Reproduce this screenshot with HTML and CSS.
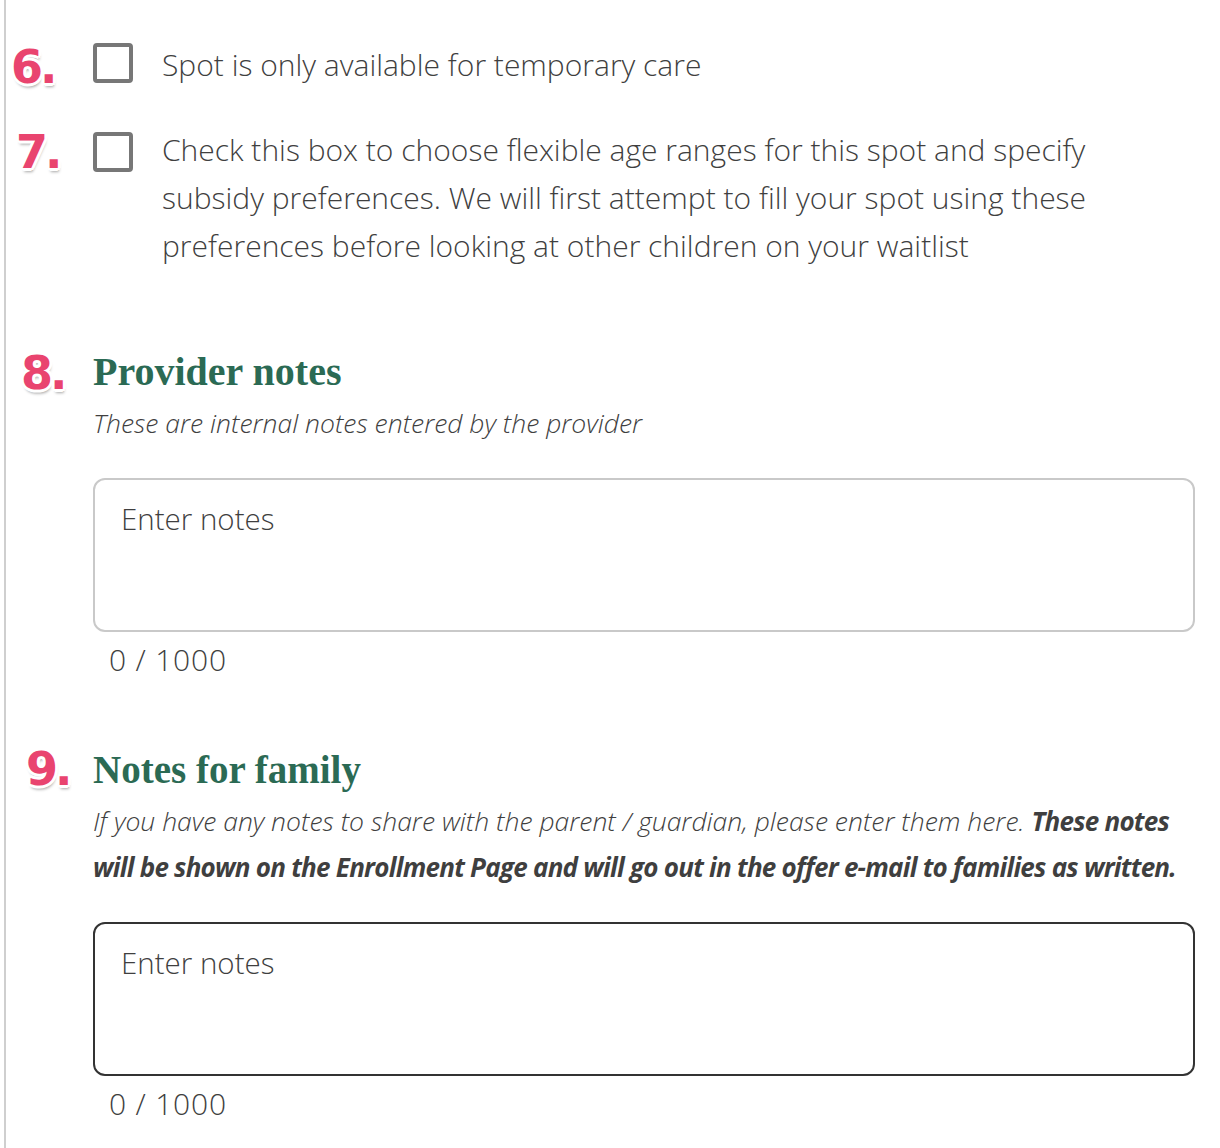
FILE: index.html
```html
<!DOCTYPE html>
<html lang="en">
<head>
<meta charset="utf-8">
<title>Spot settings</title>
<link rel="stylesheet" href="styles.css">
</head>
<body>
<div class="page">
  <div class="check-row row-6">
    <span class="badge badge-6">6.</span>
    <span class="box"></span>
    <p class="check-label">Spot is only available for temporary care</p>
  </div>
  <div class="check-row row-7">
    <span class="badge badge-7">7.</span>
    <span class="box"></span>
    <p class="check-label">Check this box to choose flexible age ranges for this spot and specify subsidy preferences. We will first attempt to fill your spot using these preferences before looking at other children on your waitlist</p>
  </div>

  <section class="notes notes-provider">
    <span class="badge badge-8">8.</span>
    <h2 class="notes-title">Provider notes</h2>
    <p class="notes-desc">These are internal notes entered by the provider</p>
    <div class="field field-light"><span class="placeholder">Enter notes</span></div>
    <div class="counter">0 / 1000</div>
  </section>

  <section class="notes notes-family">
    <span class="badge badge-9">9.</span>
    <h2 class="notes-title">Notes for family</h2>
    <p class="notes-desc">If you have any notes to share with the parent / guardian, please enter them here. <strong>These notes<br>will be shown on the Enrollment Page and will go out in the offer e-mail to families as written.</strong></p>
    <div class="field field-dark"><span class="placeholder">Enter notes</span></div>
    <div class="counter">0 / 1000</div>
  </section>
</div>
</body>
</html>
```

FILE: styles.css
```css
html, body {
  margin: 0;
  padding: 0;
  background: #ffffff;
}

body {
  font-family: "Open Sans", "Liberation Sans", sans-serif;
  color: #404040;
}

.page {
  position: relative;
  margin-left: 4px;
  border-left: 2px solid #cfcfcf;
  min-height: 1148px;
  box-sizing: border-box;
  padding: 41px 0 0 87px;
}

.check-row {
  position: relative;
  display: flex;
  align-items: flex-start;
  gap: 29px;
}

.row-7 {
  margin-top: 37px;
}

.box {
  flex: none;
  width: 40px;
  height: 40px;
  box-sizing: border-box;
  border: 4px solid #777777;
  border-radius: 4px;
  margin-top: 2px;
}

.row-7 .box {
  margin-top: 6px;
}

.check-label {
  margin: 0;
  font-size: 30px;
  font-weight: 300;
  line-height: 48px;
  color: #3f3f3f;
  max-width: 945px;
}

.notes {
  position: relative;
}

.notes-provider {
  margin-top: 78px;
}

.notes-family {
  margin-top: 66px;
}

.notes-title {
  margin: 0;
  font-family: "Liberation Serif", "Times New Roman", serif;
  font-weight: 700;
  font-size: 40px;
  line-height: 48px;
  color: #2b6a54;
}

.notes-family .notes-title {
  font-size: 39px;
}

.notes-desc {
  margin: 4px 0 0;
  font-size: 26.5px;
  font-style: italic;
  font-weight: 300;
  line-height: 46px;
  color: #3f3f3f;
  white-space: nowrap;
}

.notes-family .notes-title {
  margin-top: 2px;
}

.notes-desc strong {
  font-weight: 700;
  font-size: 26px;
  letter-spacing: -0.75px;
}

.field {
  margin-top: 32px;
  width: 1102px;
  height: 154px;
  box-sizing: border-box;
  border-radius: 12px;
  padding: 15px 26px 14px;
  font-size: 29.5px;
  font-weight: 300;
  line-height: 48px;
}

.field-light {
  border: 2px solid #c9c9c9;
}

.field-dark {
  border: 2px solid #333333;
}

.placeholder {
  color: #3f3f3f;
}

.counter {
  margin: 8px 0 0 16px;
  font-size: 30px;
  font-weight: 300;
  letter-spacing: 0.8px;
  line-height: 40px;
  color: #3f3f3f;
}

.badge {
  position: absolute;
  font-family: "DejaVu Sans", sans-serif;
  font-weight: 700;
  font-size: 46px;
  line-height: 46px;
  letter-spacing: -3px;
  color: #e9446f;
  text-shadow:
    2px 0 0 #fff, -2px 0 0 #fff, 0 2px 0 #fff, 0 -2px 0 #fff,
    2px 2px 0 #fff, -2px -2px 0 #fff, 2px -2px 0 #fff, -2px 2px 0 #fff,
    3px 0 0 #fff, -3px 0 0 #fff, 0 3px 0 #fff, 0 -3px 0 #fff,
    1px 4px 3px rgba(0, 0, 0, 0.35);
}

.badge-6 { left: -82px; top: 3px; }
.badge-7 { left: -77px; top: 3px; }
.badge-8 { left: -72px; top: 2px; }
.badge-9 { left: -67px; top: 0; }
```
